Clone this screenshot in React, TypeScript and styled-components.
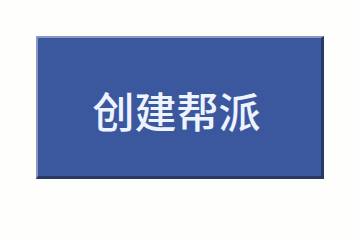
import styled, { createGlobalStyle } from "styled-components";

const Global = createGlobalStyle`
    html, body {
        margin:0;
        padding:0;
        background:#fefefc;
    }
`;

const Page = styled.div`
    width:360px;
    height:212px;
    box-sizing:border-box;
    padding:36px 36px 33px 36px;
    display:flex;
`;

const Button = styled.button`
    flex:1;
    box-sizing:border-box;
    display:flex;
    justify-content:center;
    align-items:center;
    padding:4px 6px 0 0;
    margin:0;
    background:#3b589f;
    border-style:solid;
    border-width:2px 3px 3px 2px;
    border-color:#8a98c8 #2a3866 #2a3866 #8a98c8;
    color:#eef3ff;
    font-family:"Noto Sans CJK SC", "Noto Sans", sans-serif;
    font-size:42px;
    font-weight:500;
    letter-spacing:0;
    cursor:pointer;
`;

function App(){
    return (
        <>
            <Global/>
            <Page>
                <Button>创建帮派</Button>
            </Page>
        </>
    )
}

export default App;
